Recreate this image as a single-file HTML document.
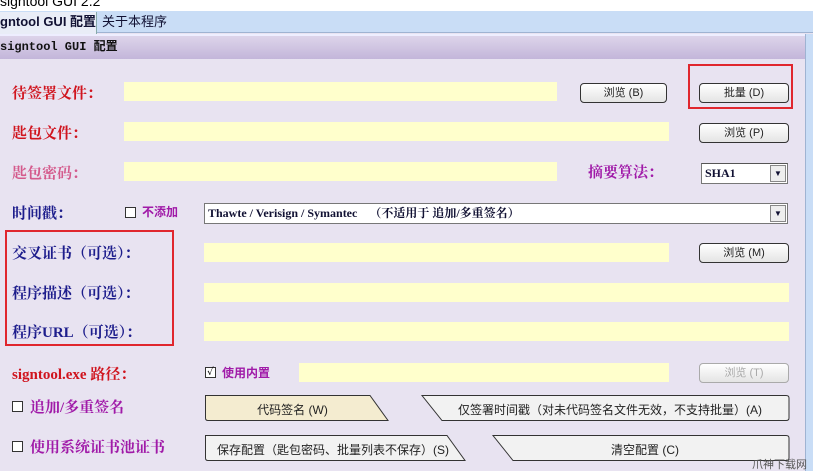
<!DOCTYPE html>
<html><head><meta charset="utf-8"><style>
*{margin:0;padding:0;box-sizing:border-box}
html,body{width:813px;height:471px;overflow:hidden}
body{background:#e8e3f1;position:relative;font-family:"Liberation Serif","Noto Serif CJK SC",serif}
.a{position:absolute}
.lbl{position:absolute;font-weight:bold;font-size:15px;line-height:20px;white-space:nowrap;margin-top:2px}
.red{color:#d0141e}.blue{color:#1d1d8c}.pur{color:#a01aa8}.pink{color:#d45a8c}
.inp{position:absolute;background:#ffffcc;height:19px}
.btn{position:absolute;height:20px;border:1px solid #333;border-radius:4px;background:linear-gradient(#fff,#e4e4e4);font-family:"Liberation Sans","Noto Sans CJK SC",sans-serif;font-size:11px;text-align:center;line-height:18px;color:#222}
.cb{position:absolute;width:11px;height:11px;border:1px solid #333;background:#fff}
.sk{position:absolute;font-family:"Liberation Sans","Noto Sans CJK SC",sans-serif;font-size:12px;color:#222;text-align:center;white-space:nowrap}
</style></head><body>
<div class="a" style="left:0;top:0;width:813px;height:11px;background:#fff;overflow:hidden"><div style="font-family:'Liberation Sans',sans-serif;font-size:14px;margin-top:-7px;white-space:nowrap">signtool GUI 2.2</div></div>
<div class="a" style="left:0;top:11px;width:813px;height:22px;background:#c9ddf6;border-bottom:1px solid #9fb3d2"></div>
<div class="a" style="left:0;top:12px;width:97px;height:22px;background:#e9edf7;border-right:1px solid #8aa;font-family:'Liberation Sans','Noto Sans CJK SC',sans-serif;font-size:13px;line-height:20px;font-weight:bold;color:#113;white-space:nowrap;overflow:hidden">gntool GUI 配置</div>
<div class="a" style="left:102px;top:12px;font-family:'Liberation Sans','Noto Sans CJK SC',sans-serif;font-size:13px;line-height:20px;color:#113;white-space:nowrap">关于本程序</div>
<div class="a" style="left:0;top:34px;width:805px;height:2px;background:#eef"></div>
<div class="a" style="left:0;top:36px;width:805px;height:23px;background:linear-gradient(#ddd4ea,#c3b6da);font-family:'Liberation Mono','Noto Sans CJK SC',monospace;font-size:12px;font-weight:bold;line-height:22px;color:#111;white-space:nowrap">signtool GUI 配置</div>
<div class="a" style="left:805px;top:34px;width:8px;height:437px;background:#c9ddf6;border-left:1px solid #9fb3d2"></div>

<div class="lbl red" style="left:12px;top:82px">待签署文件：</div>
<div class="inp" style="left:124px;top:82px;width:433px"></div>
<div class="btn" style="left:580px;top:83px;width:87px">浏览 (B)</div>
<div class="a" style="left:688px;top:64px;width:105px;height:45px;border:2px solid #e0262e"></div>
<div class="btn" style="left:699px;top:83px;width:90px">批量 (D)</div>

<div class="lbl red" style="left:12px;top:122px">匙包文件：</div>
<div class="inp" style="left:124px;top:122px;width:545px"></div>
<div class="btn" style="left:699px;top:123px;width:90px">浏览 (P)</div>

<div class="lbl pink" style="left:12px;top:162px">匙包密码：</div>
<div class="inp" style="left:124px;top:162px;width:433px"></div>
<div class="lbl pur" style="left:588px;top:161px">摘要算法：</div>
<div class="a" style="left:701px;top:163px;width:87px;height:21px;background:#fff;border:1px solid #777;border-top-color:#555;font-weight:bold;font-size:12px;line-height:19px;padding-left:3px;color:#113">SHA1<div class="a" style="right:1px;top:1px;width:16px;height:17px;background:#eee;border:1px solid #888;font-size:8px;line-height:15px;text-align:center">▼</div></div>

<div class="lbl blue" style="left:12px;top:202px">时间戳：</div>
<div class="cb" style="left:125px;top:207px"></div>
<div class="a pur" style="left:142px;top:203px;font-size:12px;font-weight:bold;font-family:'Liberation Sans','Noto Sans CJK SC',sans-serif;white-space:nowrap">不添加</div>
<div class="a" style="left:204px;top:203px;width:584px;height:21px;background:#fff;border:1px solid #777;font-weight:bold;font-size:12px;line-height:19px;padding-left:3px;color:#113;white-space:nowrap">Thawte / Verisign / Symantec &nbsp;&nbsp;&nbsp;（不适用于 追加/多重签名）<div class="a" style="right:1px;top:1px;width:16px;height:17px;background:#eee;border:1px solid #888;font-size:8px;line-height:15px;text-align:center">▼</div></div>

<div class="a" style="left:5px;top:230px;width:169px;height:116px;border:2px solid #e0262e"></div>
<div class="lbl blue" style="left:12px;top:242px">交叉证书（可选）：</div>
<div class="inp" style="left:204px;top:243px;width:465px"></div>
<div class="btn" style="left:699px;top:243px;width:90px">浏览 (M)</div>
<div class="lbl blue" style="left:12px;top:282px">程序描述（可选）：</div>
<div class="inp" style="left:204px;top:283px;width:585px"></div>
<div class="lbl blue" style="left:12px;top:321px">程序URL（可选）：</div>
<div class="inp" style="left:204px;top:322px;width:585px"></div>

<div class="lbl red" style="left:12px;top:363px">signtool.exe 路径：</div>
<div class="cb" style="left:205px;top:367px;font-size:10px;line-height:9px;text-align:center;font-weight:bold">✓</div>
<div class="a pur" style="left:222px;top:364px;font-size:12px;font-weight:bold;font-family:'Liberation Sans','Noto Sans CJK SC',sans-serif;white-space:nowrap">使用内置</div>
<div class="inp" style="left:299px;top:363px;width:370px"></div>
<div class="btn" style="left:699px;top:363px;width:90px;border-color:#aaa;color:#aaa">浏览 (T)</div>

<div class="cb" style="left:12px;top:401px"></div>
<div class="lbl pur" style="left:30px;top:396px">追加/多重签名</div>
<svg class="a" style="left:200px;top:393px" width="595" height="72">
<path d="M5.5,2.5 H170 L188,27.5 H8 Q5.5,27.5 5.5,25 Z" fill="#f4ecd0" stroke="#333"/>
<path d="M222,2.5 H586 Q589,2.5 589,5 V25 Q589,27.5 586,27.5 H242 Z" fill="#f2f2f2" stroke="#333"/>
<path d="M5.5,42.5 H247 L265,67.5 H8 Q5.5,67.5 5.5,65 Z" fill="#f2f2f2" stroke="#333"/>
<path d="M293,42.5 H586 Q589,42.5 589,45 V65 Q589,67.5 586,67.5 H313 Z" fill="#f2f2f2" stroke="#333"/>
</svg>
<div class="sk" style="left:210px;top:401px;width:165px">代码签名 (W)</div>
<div class="sk" style="left:440px;top:401px;width:340px">仅签署时间戳（对未代码签名文件无效，不支持批量）(A)</div>
<div class="cb" style="left:12px;top:441px"></div>
<div class="lbl pur" style="left:30px;top:436px">使用系统证书池证书</div>
<div class="sk" style="left:208px;top:441px;width:250px">保存配置（匙包密码、批量列表不保存）(S)</div>
<div class="sk" style="left:510px;top:441px;width:270px">清空配置 (C)</div>
<div class="a" style="left:752px;top:456px;font-size:11px;color:#555;font-family:'Liberation Sans','Noto Sans CJK SC',sans-serif;white-space:nowrap">爪神下载网</div>
</body></html>
